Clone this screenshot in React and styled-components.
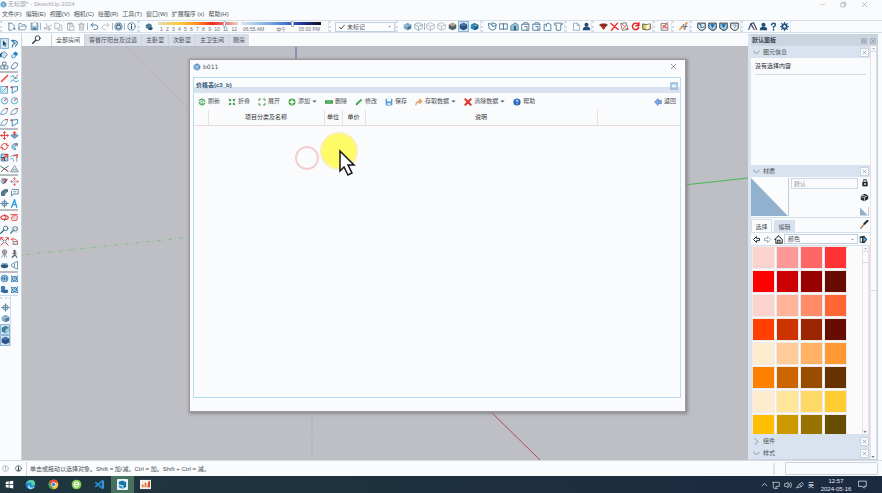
import React from "react";
import styled, { createGlobalStyle, css } from "styled-components";

const Global = createGlobalStyle`
  *, *::before, *::after { box-sizing: border-box; }
  html, body { margin: 0; height: 100%; }
  #root { height: 100%; }
  body, button, input, select, table {
    font-family: "Liberation Sans", "Noto Sans CJK SC", sans-serif;
    font-size: 6px;
    color: #4c5055;
  }
  button, input, select { margin: 0; padding: 0; border: 0; background: none; }
`;

const B = "#4f7d9d";
const D = "#1d4569";
const R = "#e8433e";
const st = (c = B, w = 1.1) => ({ fill: "none", stroke: c, strokeWidth: w, strokeLinecap: "round", strokeLinejoin: "round" });

const art = {
  file: <path d="M2.5 1.5h4.5l3 3v6.5h-7.5zM7 1.5v3h3" {...st("#8da5b6")} />,
  filePlus: <g><path d="M2.5 1.5h4l3 3v2M6 11h-3.500v-9.500" {...st(B)} /><path d="M8 9h3M9.500 7.500v3" {...st(B)} /></g>,
  folder: <path d="M1 10v-8h3.500l1 1.500h4v2M1 10l2-4.500h8.500l-2 4.500z" {...st("#7897aa")} />,
  save: <g><path d="M1.500 1.500h9v9h-9z" fill="#a9c6df" stroke={B} /><path d="M3.500 1.500h5v3.500h-5z" fill="#fff" /><path d="M3.500 7.500h5v3h-5z" fill={B} /></g>,
  cut: <g><path d="M4 2l3.500 6M11 4.500l-7 3" {...st("#a5afb8")} /><circle cx="3" cy="8.500" r="1.500" {...st("#a5afb8")} /><circle cx="8" cy="9.500" r="1.500" {...st("#a5afb8")} /></g>,
  copy: <path d="M1.500 1.500h4.500l1.500 2v5h-6zM5 8.500v2.500h5.500v-6.500l-3-1" {...st("#abb4bc")} />,
  paste: <path d="M2 2h7v3M2 2v8.500h3M4 1h3v2h-3zM5.500 5.500h5v5.500h-5z" {...st("#a2adb6")} />,
  trash: <path d="M2 3h8M4.500 3v-1.500h3v1.500M3 3l.5 8h5l.5-8M5 5v4M7 5v4" {...st("#a9b2ba")} />,
  undo: <path d="M4 1.500l-2.500 2.500l2.500 2.500M1.500 4h6q3 .5 3 3t-3 3h-2" {...st(B, 1.3)} />,
  redo: <path d="M8 1.500l2.500 2.500l-2.500 2.500M10.500 4h-6q-3 .5-3 3t3 3h2" {...st("#b4bfc8", 1.2)} />,
  print: <g><circle cx="6" cy="6" r="5" fill="#bdd2e2" stroke={B} /><path d="M3.500 5h5v3.500h-5zM4.500 5v-2h3v2" fill="#fff" stroke={D} /></g>,
  info: <g><circle cx="6" cy="6" r="5" {...st(B)} /><path d="M6 5.500v3M6 3.200v.3" {...st(D, 1.5)} /></g>,
  shadow: <g><path d="M1 4l4-2.500 4 2v4l-4 2-4-2z" fill={B} /><path d="M7 7l4 1-3 3-4-1z" fill={D} /></g>,
  cube: <g><path d="M6 1l5 2.500v5l-5 2.500-5-2.500v-5z" fill="#7eabc8" /><path d="M6 5.500l5-2v5l-5 2.500z" fill={D} opacity=".5" /><path d="M1 3.500l5 2 5-2" {...st("#d4e7f1", .7)} /></g>,
  wire: <path d="M6 1l5 2.500v5l-5 2.500-5-2.500v-5zM1 3.500l5 2.500 5-2.500M6 6v5" {...st("#8ba6b9")} />,
  wireGrey: <path d="M6 1l5 2.500v5l-5 2.500-5-2.500v-5zM1 3.500l5 2.500 5-2.500M6 6v5" {...st("#afb9c1")} />,
  darkCube: <g><path d="M6 1l5 2.500v5l-5 2.500-5-2.500v-5z" fill="#53636c" /><path d="M6 1l5 2.500-5 2.500-5-2.500z" fill="#b4a58f" /></g>,
  blueCube: <g><path d="M6 1l5 2.500v5l-5 2.500-5-2.500v-5z" fill="#2b4f86" /><path d="M6 1l5 2.500-5 2.500-5-2.500z" fill="#4674a4" /></g>,
  colorCube: <g><path d="M6 1l5 2.500v5l-5 2.500-5-2.500v-5z" fill="#248bc1" /><path d="M6 6l5-2.500v5l-5 2.500z" fill="#155b8a" /><path d="M6 4h3l-1 3z" fill="#f0a33d" /></g>,
  teal: <g><path d="M6 1l5 2.500v5l-5 2.500-5-2.500v-5z" fill="#3b7f93" /><path d="M6 6l5-2.500v5l-5 2.500z" fill="#a3cfdc" /></g>,
  iso: <path d="M1 2l4 1 1-2 5 2-1 6-4 2-4-2zM5 3l1 3 4-1" {...st("#3d7293", 1.2)} />,
  top: <path d="M1 2.500h10v7h-10zM6 2.500v7" {...st("#3d7293", 1.2)} />,
  house: <g><path d="M1 5l6-4 4 3v7h-10z" fill="#9bc9db" stroke="#3d7293" /><path d="M5 11v-6h3v6" fill="#35657f" /></g>,
  elev: <path d="M1.500 3h9v8h-9zM3 3l1-2h5l1 2M5 6h3v5" {...st("#3d7293", 1.1)} />,
  open: <path d="M1.500 11v-8h3l2-1.500 4 2v7.500zM4.500 3v3" {...st("#3d7293", 1.1)} />,
  under: <path d="M1 1.500h10v2h-2v7.500h-6v-7h-2z" {...st("#3d7293", 1.1)} />,
  user: <g><circle cx="6" cy="3.700" r="2.700" fill="#204d74" /><path d="M1 11q0-5 5-5t5 5z" fill="#204d74" /></g>,
  ruby: <g><path d="M1 4l2-2h6l2 2-5 6.500z" fill="#b22b1e" /><path d="M1 4h10" {...st("#553029", 1.5)} /></g>,
  cross: <path d="M1 2l10 8M10 1.500L2 11" {...st("#ee2b2f", 1.8)} />,
  report: <g><path d="M1 2l7-1 3 9-8 1z" fill="#fff" stroke="#555" /><path d="M3 3l3 3M8 4l-4 5M7 8l3 1" {...st(R)} /></g>,
  reload: <path d="M9.500 3a4.300 4.300 0 1 0 .7 4.500M10.500 1v4h-4" {...st("#e62928", 2)} />,
  book: <g><path d="M1 2.500l5 1 5-1v7l-5 1-5-1z" fill="#e8d450" stroke="#303030" /><path d="M6 4l4-1v6l-4 1z" fill="#fff" /></g>,
  note: <g><path d="M1.500 2h7l2 2v7h-9z" fill="#eee" stroke="#6b6b6b" /><path d="M4 8l6-7M4 5l5 3" {...st(R, 1.4)} /></g>,
  wand: <g><path d="M1 10l4-5M6 3l1 7M10 1l-2 9M3 6h8" {...st("#576876")} /><path d="M1 10l4-4M8 3l3-2" {...st("#e39a2f", 1.8)} /></g>,
  tag: <g><path d="M1 1.500h10v7l-3 2.500h-3l-4-3z" fill="#dcebf4" stroke="#252b30" strokeWidth="1.200" /><path d="M3 3h2v4h4" {...st("#3c789e", 1.6)} /></g>,
  tagBlue: <g><path d="M1 1.500h10v7l-3 2.500h-3l-4-3z" fill="#9ccce9" stroke="#252b30" strokeWidth="1.200" /><path d="M3 3h6l-3 5z" fill="#1264a2" /></g>,
  tagPlain: <g><path d="M1 1.500h10v7l-3 2.500h-3l-4-3z" fill="#f5f8fb" stroke="#252b30" strokeWidth="1.200" /><path d="M4 4h4v2l-2 1.500" {...st(B)} /></g>,
  mark: <g><path d="M1 10L4 2l4 8M4.500 2l3-1 4 9" {...st("#214b71", 1.5)} /><path d="M5 6l4 4" {...st("#d44b36", 1.3)} /></g>,
  question: <path d="M3.500 4q0-2.500 2.500-2.500t2.500 2.200q0 1.500-2.500 2.800v1M6 10v.500" {...st("#1f5d93", 2)} />,
  gear: <g><circle cx="6" cy="6" r="3" {...st("#205789", 2.6)} /><path d="M6 .7v1.500M6 9.800v1.500M.7 6h1.500M9.800 6h1.500M2.200 2.200l1 1M8.800 8.800l1 1M9.800 2.200l-1 1M3.200 8.800l-1 1" {...st("#205789", 1.500)} /></g>,
  arrow: <path d="M4 2v7l1.500-1.500 1.200 2.500 1.300-.8-1.200-2.200h2.200z" fill="#173e63" />,
  lasso: <path d="M2 2q7-1 8 4M2 2l5 4-3 1-1 4M10 6l-3 4" {...st("#367da5", 1.4)} />,
  bucket: <g><path d="M2 4l4-2 4 4-4 5-4-2z" fill="#c5dfed" stroke={B} /><path d="M2 4q-2 2-1 5" {...st(D, 1.4)} /></g>,
  eraser: <g><path d="M1 8l6-6 4 3-5 6h-3z" fill="#277fbd" /><path d="M1 8l3-3 4 3-3 3z" fill="#bde0f3" /></g>,
  group: <g><path d="M4 1.500h4v4h-4zM1.500 6.500h4v4h-4zM6.500 6.500h4v4h-4z" {...st("#5e7d91", 1.2)} /></g>,
  shape: <path d="M2 7l4-5 4 1v3l-4 4.500h-3z" {...st(B, 1.2)} />,
  pencil: <path d="M2 10l8-8" {...st(R, 2)} />,
  free: <g><path d="M1 4q4-4 4 0t5 1M1 10q4-4 5-1t5 0" {...st("#3ca0cb", 1.3)} /><path d="M7 5l3-4" {...st(R)} /></g>,
  rect: <g><path d="M1 2h9v9h-9z" fill="#d8eff7" stroke="#4b9ec5" /><path d="M3 9l6-6" {...st("#4b9ec5")} /><path d="M8 2h2v2" {...st(R, 1.3)} /></g>,
  rot: <g><path d="M1 3l9-1v5l-6 3M3 3v8" {...st("#3b8db7", 1.3)} /><circle cx="2" cy="3" r="1.200" fill={R} /></g>,
  circle: <g><circle cx="6" cy="6.300" r="4.300" fill="#e2f3fa" stroke="#4599bf" /><path d="M6 6l3-3" {...st(R, 1.4)} /></g>,
  arc: <g><path d="M1 10q1-7 7-8M2 10q8 1 8-8" {...st("#5b8ba5")} /><path d="M8 2h2" {...st(R, 1.6)} /></g>,
  move: <path d="M6 1v10M1 6h10M4.500 2.500L6 1l1.500 1.500M4.500 9.500L6 11l1.500-1.500M2.500 4.500L1 6l1.500 1.500M9.500 4.500L11 6l-1.500 1.500" {...st(R, 1.3)} />,
  push: <g><path d="M1 6l5-2 5 2-5 4z" fill="#6ab4da" stroke="#3182b0" /><path d="M6 7v-6M4 3l2-2 2 2" {...st(R, 1.4)} /></g>,
  rotate: <path d="M2 5q1-3 4-3t4 3M10 7q-1 3-4 3t-4-3M9 2v3h3M3 10v-3h-3" {...st(R, 1.3)} />,
  follow: <g><path d="M8 10h-3q-4-2-2-6 3-3 7-2v3q-4-1-4 2z" fill="#a3d0e5" stroke="#408eb4" /><path d="M7 3h3" {...st(R, 1.4)} /></g>,
  scale: <g><path d="M1.500 1.500h9v9h-9z" fill="#a9d4e8" stroke="#366f91" /><path d="M3 9l6-6M6 2h4v4" {...st(R, 1.5)} /><path d="M1.500 6h4.500v4.500" {...st(D)} /></g>,
  offset: <g><path d="M1 5q7-5 8 0v6M1 8q4-3 4 3" {...st("#6a99b2")} /><path d="M5 4l5-2-1 4" {...st(R, 1.4)} /></g>,
  tape: <g><path d="M1 3l10 7M2 10l4-4 5-3" {...st("#416e79", 1.3)} /><path d="M6 6.500l3 2" {...st(R, 1.4)} /></g>,
  prot: <path d="M1 10l5-8 5 8zM4 10v-3h4v3" {...st("#7c96a4", 1.2)} />,
  paintRed: <g><circle cx="5" cy="5" r="4" fill="#9bbcce" /><path d="M4 4l4-1-1 4" {...st(R, 1.7)} /><path d="M4 9l6-6" {...st(D)} /></g>,
  diamond: <g><path d="M6 2v.1M2 6h.1M10 6h.1M6 10v.1" {...st(R, 2.800)} /><path d="M4 4l4 4M8 4l-4 4" {...st("#7d9eb4", 1)} /></g>,
  film: <path d="M2 10V6q1-4 8-4v3q-4 0-4 5z" fill="#507f95" stroke="#355669" />,
  label: <path d="M3 2h8v6h-7l-2 3v-7M5 5h3" {...st(B)} />,
  target: <g><circle cx="6" cy="6" r="3.500" fill="#c8d9e4" stroke={B} /><path d="M6 1v10M1 6h10" {...st(B)} /></g>,
  textA: <path d="M2 11L6 1l3 10M3.500 7.500h4" {...st("#319dd7", 1.8)} />,
  orbit: <g><ellipse cx="6" cy="6" rx="5" ry="2.600" {...st(R, 1.600)} /><path d="M6 2l2 3-2 5" {...st("#a84745", 1.3)} /></g>,
  pan: <g><path d="M3 10q-3-5 0-4 0-5 2-2 3-3 5 1l-1 5z" fill="#f0d4d2" stroke={R} /><path d="M1 2h9" {...st(R)} /></g>,
  zoom: <g><circle cx="7.500" cy="4.500" r="3" {...st("#356d91", 1.2)} /><path d="M5 7l-4 4" {...st("#356d91", 1.7)} /></g>,
  zoomWin: <g><path d="M1 2h10v8h-10z" fill="#d8e6ed" /><circle cx="7" cy="5" r="3" {...st("#557d94")} /><path d="M4.500 7L1 11" {...st("#557d94", 1.6)} /></g>,
  extents: <g><path d="M1 1l10 10M11 1L1 11M1 4V1h3M8 1h3v3" {...st(R, 1.3)} /><circle cx="6" cy="6" r="2" fill="#fff" stroke={B} /></g>,
  prev: <g><path d="M2 3h5q4 1 3 6h-4M4 1L2 3l2 2" {...st(R, 1.1)} /><path d="M4 6h6v4h-6z" fill="#e5d9d9" stroke="#887276" /></g>,
  camera: <g><circle cx="6" cy="4" r="3" fill="#b4bbbd" stroke="#6a7478" /><circle cx="6" cy="4" r="1" fill={R} /><path d="M5 7l-3 4M7 7l2 4M6 7v4" {...st("#798e98")} /></g>,
  walk: <g><circle cx="6" cy="2.500" r="1.600" fill="#4d626e" /><path d="M6 4v4l-3 3M6 7l3 4M4 6l4-1" {...st("#4d626e", 1.6)} /><path d="M6 4l2 3" {...st(R)} /></g>,
  eye: <g><ellipse cx="6" cy="6" rx="5" ry="3.500" fill="#2c5875" /><path d="M2 5q4-3 8 0" {...st("#87bad4", 1.5)} /></g>,
  section: <path d="M10 1v10l-8-4v-2zM6 4v4" {...st("#5e8faa", 1.2)} />,
  globe: <g><circle cx="6" cy="6" r="5" fill="#3e81b1" /><path d="M2 4q4-3 8 0M2 8q4 3 8 0M6 1q-4 5 0 10M6 1q4 5 0 10" {...st("#c8e2ee", .8)} /></g>,
  mesh: <g><path d="M1 2l4 1 6-1-1 4 1 5-5-1-5 1 1-5z" fill="#438bbd" /><path d="M3 4l6 5M9 3L3 9" {...st("#e2f1f8", 1.1)} /></g>,
  layers: <g><circle cx="4" cy="4" r="3" fill="#3a79ae" /><path d="M1 7l9-1 1 4-5 1-5-2z" fill="#2568a0" /></g>,
  refresh: <g><path d="M2 4q3-4 7-1l1 2M10 8q-3 4-7 1l-1-2" {...st("#5baa62", 2)} /><path d="M4 6l3-2M5 9l3-2" {...st("#76bd7a", 1.7)} /></g>,
  collapse: <path d="M1.500 1.500l2.500 2.500M10.500 1.500L8 4M1.500 10.500L4 8M10.500 10.500L8 8M4 2v2H2M8 2v2h2M4 10V8H2M8 10V8h2" {...st("#3f9547", 1.5)} />,
  expand: <path d="M1.500 4V1.500H4M8 1.500h2.500V4M1.500 8v2.500H4M8 10.500h2.500V8" {...st("#559a5c", 1.5)} />,
  add: <g><circle cx="6" cy="6" r="5.200" fill="#3ea646" /><path d="M6 3v6M3 6h6" {...st("#fff", 2)} /></g>,
  minus: <g><rect x="0" y="3.500" width="12" height="5" rx="1" fill="#369a3f" /><path d="M3 6h6" {...st("#b7e4ba", 1)} /></g>,
  pen: <g><path d="M1 11l1-3 7-7 2 2-7 7z" fill="#44a949" /><path d="M1 11l1-2 1 1z" fill="#444" /></g>,
  disk: <g><rect x="1" y="1" width="10" height="10" rx="1" fill="#5a9cd8" /><path d="M3 1h6v4h-6z" fill="#fff" /><path d="M3 7h6v4h-6z" fill="#dae9f5" stroke="#377db7" strokeWidth=".6" /></g>,
  share: <path d="M1 11q0-7 6-7V1l4 4-4 4V6q-4 0-6 5z" fill="#f2aa6b" stroke="#cc7131" strokeWidth=".6" />,
  clear: <path d="M2 2l8 8M10 2l-8 8" {...st("#df3a31", 3.2)} />,
  help: <g><circle cx="6" cy="6" r="5.400" fill="#2467ba" /><path d="M4.300 4.500q0-1.500 1.700-1.500t1.700 1.500q0 1-1.700 1.800M6 8.500v.400" {...st("#fff", 1.3)} /></g>,
  back: <path d="M6 .8L1 6l5 5.200V8.500h5v-5H6z" fill="#7fa8de" stroke="#4a7cc4" strokeWidth="1" />,
  logo: <g><path d="M6 .5l5 3v5l-5 3-5-3v-5z" fill="#5b96c6" /><path d="M2 3l4 2 4-2M6 5v6M3 8l6-4M3 5l6 4" {...st("#c9e1f1", .8)} /></g>,
  box: <g><path d="M1 1h10v10H1z" fill="#a9cce8" stroke="#7eabd2" /><path d="M3 4h6v4H3z" fill="#e8f3fb" /></g>,
  check: <path d="M1 6l3 4 7-8" {...st("#42424e", 1.8)} />,
  x: <path d="M2 2l8 8M10 2l-8 8" {...st("currentColor", 1)} />,
  min: <path d="M2 6h8" {...st("#e5a5ad", 1)} />,
  max: <path d="M2 4h6v6H2zM4 4V2h6v6H8" {...st("#888", .8)} />,
  pin: <path d="M1.500 1.500h9v9h-9zM4 4h4v3H4zM6 7v2" {...st("#718096", 1)} />,
  boxX: <path d="M1.500 1.500h9v9h-9zM4 4l4 4M8 4L4 8" {...st("#718096", 1)} />,
  down: <path d="M1 3.500l5 5 5-5" {...st("#68747f", 1.2)} />,
  right: <path d="M3.500 1l5 5-5 5" {...st("#68747f", 1.2)} />,
  triUp: <path d="M3 7.500l3-3 3 3z" fill="#777" />,
  triDown: <path d="M1 3.500h10l-5 5z" fill="currentColor" />,
  search: <g><circle cx="7.500" cy="4.300" r="3.200" {...st("#303c45", 1.3)} /><path d="M5 7L1 11" {...st("#303c45", 2)} /></g>,
  jar: <g><path d="M2 4h8v7H2z" fill="#20282c" /><path d="M4 3V1h4v2" {...st("#30393e", 1.4)} /><path d="M5 6h2v3H5z" fill="#fff" /></g>,
  brick: <g><path d="M1 4l5-3 5 2v5l-5 3-5-2z" fill="#282b2d" /><path d="M1 5l5 1 5-3M6 6v4M3 3l4 1" {...st("#d8d8d8", 1)} /></g>,
  dropper: <g><path d="M1 11l6-7" {...st("#a67850", 1.7)} /><path d="M6 5l4-4" {...st("#272c34", 2.7)} /></g>,
  navL: <path d="M2 6l4-4v2.500h4v3H6V10z" fill="#fff" stroke="#26323d" strokeWidth="1.300" />,
  navR: <path d="M10 6L6 2v2.500H2v3h4V10z" fill="#fff" stroke="#89929a" strokeWidth="1" />,
  home: <path d="M1 6l5-5 5 5v5H2.500V6M5 11V7h3v4" {...st("#2b3135", 1.400)} />,
  detail: <g><path d="M1 2l6-1 4 5-4 5-6-1z" fill="#27343e" /><path d="M6 3l4 3-4 3z" fill="#53aed9" /><path d="M2 4h2v5H2z" fill="#fff" /></g>,
  win: <path d="M1 2.500l4-.7v3.700H1zM6 1.700l5-.8v4.600H6zM1 6.500h4v3.800l-4-.6zM6 6.500h5v4.700l-5-.8z" fill="#fff" />,
  edge: <g><circle cx="6" cy="6" r="5.300" fill="#1c86cf" /><path d="M1 6Q2 1 7 1q4 0 4 4 0 3-4 2 1-4-3-3Q2 4 1 6z" fill="#5bd0a0" /><path d="M5 6q-1 4 4 3l2-1q-2 4-6 3Q1 9 5 6z" fill="#95dcf6" /></g>,
  chrome: <g><circle cx="6" cy="6" r="5.300" fill="#f6c72f" /><path d="M1.300 3.500A5.300 5.300 0 0 1 11 4H6L4 7z" fill="#e54c3b" /><path d="M1.300 3.500L5 9l1 2.300A5.300 5.300 0 0 1 1.300 3.500z" fill="#3fa65a" /><circle cx="6" cy="6" r="2.300" fill="#3e80df" stroke="#fff" strokeWidth=".7" /></g>,
  green: <g><circle cx="6" cy="6" r="5.300" fill="#82cf4d" /><path d="M3.500 6h5q0-2.700-2.500-2.700T3.500 6t2.500 2.700l2-1" {...st("#fff", 1.300)} /></g>,
  code: <g><path d="M8.500 1L11 2v8l-2.500 1z" fill="#3198df" /><path d="M9 2L2 8M9 10L2 4" {...st("#2b8bd1", 2)} /></g>,
  sketch: <g><rect x="0" y="0" width="12" height="12" rx="1" fill="#e8f3f8" /><path d="M2 3l4-1.500 4 2v5l-3 2V7L2 6z" fill="#1675ac" /><path d="M2 7l4 1v3L2 9z" fill="#2e90c8" /></g>,
  media: <g><path d="M0 1h12v10H0z" fill="#f6eeea" /><path d="M2 9V6h2v3M5 9V4h2v5" fill="#e17d2e" /><path d="M8 9l1-6 2-1v7z" fill="#d44d35" /></g>,
  monitor: <path d="M1 2h10v6H6v3M3 11h5M2 2v8" {...st("#e4e8ef", 1)} />,
  sound: <path d="M1 4h2l3-2v8L3 8H1zM8 4q2 2 0 4M10 2q3 4 0 8" {...st("#e4e8ef", 1)} />,
  link: <path d="M1 10l4-5 3 3zM5 5l4-3 2 3-3 3" {...st("#e4e8ef", 1)} />,
  up: <path d="M2 8l4-4 4 4" {...st("#e4e8ef", 1.3)} />,
  chat: <path d="M1 1.500h10v7H8v2.500L6 8.500H1z" {...st("#e4e8ef", 1)} />,
  statusQ: <g><circle cx="6" cy="6" r="5" {...st("#98a0a6", 1)} /><path d="M6 3v3M6 8.500v.300" {...st("#98a0a6", 1.500)} /></g>,
  statusI: <g><circle cx="6" cy="6" r="5" {...st("#30373c", 1)} /><path d="M6 3v6M4.500 9h3" {...st("#30373c", 1.600)} /></g>,
};

const Svg = styled.svg`
  display: block;
  flex: none;
  width: ${(p) => p.$s || 9}px;
  height: ${(p) => p.$s || 9}px;
`;
const Icon = ({ n, s }) => <Svg viewBox="0 0 12 12" $s={s} aria-hidden="true">{art[n]}</Svg>;

const Screen = styled.div`
  height: 100vh;
  display: flex;
  flex-direction: column;
  overflow: hidden;
  background: #f9fbfd;
  white-space: nowrap;
`;
const TitleBar = styled.header`
  display: flex;
  align-items: center;
  height: 9px;
  gap: 1px;
  color: #a5a5aa;
  line-height: 9px;
`;
const WindowButtons = styled.div`
  display: flex;
  margin-left: auto;
  gap: 12px;
  padding-right: 13px;
`;
const IconButton = styled.button`
  display: flex;
  align-items: center;
  justify-content: center;
  width: ${(p) => p.$w || 11}px;
  height: ${(p) => p.$h || 11}px;
  color: ${(p) => p.$c || "#4c5055"};
  ${(p) => p.$on && css`background: #cfe2f1; box-shadow: inset 0 0 0 1px #8db5d4; border-radius: 1px;`}
  ${(p) => p.$framed && css`background: #fbfcfe; border: 1px solid #c6d3e2;`}
`;
const MenuBar = styled.nav`
  display: flex;
  align-items: flex-start;
  gap: 4px;
  height: 11px;
  padding: 0 2px;
  button { line-height: 10px; }
`;
const Toolbar = styled.div`
  display: flex;
  height: 13px;
  border-top: 1px solid #d5dfe9;
  border-bottom: 1px solid #d5dfe9;
`;
const ToolGroup = styled.div`
  display: flex;
  align-items: center;
  width: ${(p) => p.$w}px;
  padding-left: 4px;
  border-left: 2px dotted #d3dde9;
  border-right: 1px solid #dce5ee;
  ${(p) => (p.$packed ? css`gap: 3px;` : css`justify-content: space-between;`)}
`;
const Divider = styled.span`
  width: 1px;
  height: 7px;
  background: #a4b4c2;
`;
const SliderBox = styled.label`
  display: flex;
  flex-direction: column;
  width: 80px;
  height: 11px;
  padding-top: 1px;
`;
const Range = styled.input`
  appearance: none;
  width: 100%;
  height: 3px;
  background: ${(p) => p.$bg};
  &::-webkit-slider-thumb {
    appearance: none;
    width: 3px;
    height: 6px;
    background: #fff;
    border: 1px solid #a9b0b8;
    border-radius: 1px;
  }
`;
const Ticks = styled.span`
  display: flex;
  justify-content: space-between;
  padding: 1px 1px 0 2px;
  font-size: 5px;
  line-height: 6px;
  color: #6d7178;
`;
const Picker = styled.label`
  display: flex;
  align-items: center;
  gap: 2px;
  flex: 1;
  min-width: 0;
  height: 10px;
  padding: 0 3px;
  border: 1px solid #c0d0df;
  background: #fcfdfe;
  color: #777;
  select { appearance: none; flex: 1; min-width: 0; height: 8px; line-height: 8px; }
`;
const Work = styled.div`
  display: flex;
  flex: 1;
  min-height: 0;
`;
const ToolRail = styled.aside`
  width: 22px;
  padding-top: 5px;
  border-right: 1px solid #c8d5e2;
`;
const RailGroup = styled.div`
  display: grid;
  grid-template-columns: 9px 11px;
  grid-auto-rows: ${(p) => p.$row || 11}px;
  align-items: center;
  border-bottom: ${(p) => (p.$last ? "1px solid #c9dced" : "2px solid #b9bcc2")};
  margin-right: 3px;
`;
const SubRail = styled.div`
  display: flex;
  flex-direction: column;
  width: 11px;
  margin-top: 1px;
  padding-top: 3px;
  border-top: 2px dotted #d3dde9;
  border-right: 1px solid #c9dced;
`;
const Stage = styled.main`
  display: flex;
  flex-direction: column;
  flex: 1;
  min-width: 0;
`;
const SceneTabs = styled.div`
  display: flex;
  align-items: flex-end;
  height: 14px;
  border-bottom: 1px solid #b7bbc3;
`;
const SearchButton = styled(IconButton)`
  width: 29px;
  height: 13px;
`;
const SceneTab = styled.button`
  height: 12px;
  padding: 0 4px;
  border-left: 1px solid #c9d2de;
  background: ${(p) => (p.$on ? "#fbfcfe" : "#d8dde7")};
  line-height: 12px;
`;
const Canvas = styled.div`
  position: relative;
  flex: 1;
  min-height: 0;
  overflow: hidden;
  background: #bebfc4;
`;
const Axes = styled.svg`
  display: block;
  width: 100%;
  height: 100%;
`;
const Dialog = styled.section`
  position: absolute;
  inset: 13px 63px 49px 168px;
  display: flex;
  flex-direction: column;
  padding: 0 4px 13px 3px;
  background: #f9fbfd;
  box-shadow: 0 0 0 1px #9f969e, 1px 1px 3px 2px #8b8c93;
`;
const DialogTitle = styled.header`
  display: flex;
  align-items: center;
  gap: 2px;
  height: 17px;
  padding: 0 2px 4px 0;
  font-family: "DejaVu Sans", sans-serif;
  > button { margin-left: auto; }
`;
const Sheet = styled.div`
  display: flex;
  flex-direction: column;
  flex: 1;
  min-height: 0;
  border: 1px solid #b9dcf0;
`;
const SheetTitle = styled.h1`
  display: flex;
  align-items: center;
  justify-content: space-between;
  height: 15px;
  margin: 0;
  padding: 0 2px;
  background: linear-gradient(#f9fbfd 60%, #d8e3ef 60%);
  font: bold 6px/15px "Liberation Sans", "Noto Sans CJK SC", sans-serif;
  color: #2d5376;
`;
const Actions = styled.div`
  display: flex;
  align-items: center;
  gap: 8px;
  height: 17px;
  padding: 0 4px;
  > :last-child { margin-left: auto; }
`;
const Action = styled.button`
  display: flex;
  align-items: center;
  gap: 2px;
  height: 11px;
  line-height: 11px;
`;
const Prices = styled.table`
  width: 100%;
  table-layout: fixed;
  border-collapse: collapse;
  th {
    height: 15px;
    padding: 0;
    border-bottom: 1px solid #edd9de;
    border-right: 1px solid #eddde2;
    font-size: 6px;
    font-weight: 400;
    line-height: 12px;
    color: #333;
  }
  th:last-child { border-right: 0; }
`;
const Col = styled.col`
  width: ${(p) => (p.$w ? `${p.$w}px` : "auto")};
`;
const Pointer = styled.svg`
  position: absolute;
  left: 272px;
  top: 84px;
  width: 66px;
  height: 46px;
`;
const Tray = styled.aside`
  display: flex;
  flex-direction: column;
  width: 130px;
  margin: 1px 4px 0 0;
  border: 1px solid #c7d2df;
  border-left: 3px solid #dbe5f0;
`;
const TrayTitle = styled.h2`
  display: flex;
  align-items: center;
  flex: none;
  height: 11px;
  gap: 1px;
  margin: 0;
  padding: 0 0 0 1px;
  background: #ccd4df;
  font-size: 6px;
  line-height: 11px;
  color: #3a4550;
  span { flex: 1; }
`;
const TrayMain = styled.div`
  display: flex;
  flex: 1;
  min-height: 0;
`;
const Panels = styled.div`
  display: flex;
  flex-direction: column;
  flex: 1;
  min-width: 0;
`;
const PanelHead = styled.h3`
  display: flex;
  align-items: center;
  gap: 3px;
  flex: none;
  height: 12px;
  margin: 0;
  padding: 0 1px 0 2px;
  background: #d9e3ef;
  font-size: 6px;
  font-weight: 400;
  line-height: 12px;
  span { flex: 1; }
`;
const EntityInfo = styled.div`
  height: 107px;
  padding: 4px 4px 0;
  p { margin: 0; padding-bottom: 3px; border-bottom: 1px solid #cfdcec; line-height: 9px; color: #25292d; }
`;
const Scroll = styled.div`
  display: flex;
  flex-direction: column;
  justify-content: space-between;
  width: 7px;
  border-left: 1px solid #efdde0;
  border-right: 1px solid ${(p) => (p.$inner ? "#efdde0" : "#d6dfe9")};
`;
const Thumb = styled.div`
  height: ${(p) => p.$h};
  margin-bottom: auto;
  border: solid #d3dce7;
  border-width: 1px 0;
  background: #fbfcfe;
`;
const Material = styled.div`
  display: grid;
  grid-template-columns: 38px 1fr 9px;
  gap: 2px;
  height: 41px;
  padding: 1px 1px 2px 0;
  border-bottom: 1px solid #d3e0ec;
`;
const Preview = styled.svg`
  display: block;
  width: 100%;
  height: ${(p) => p.$h}px;
  background: #fbfcfe;
  border-right: 1px solid #c5cbd3;
`;
const NameInput = styled.input`
  width: 100%;
  height: 11px;
  padding: 0 2px;
  border: 1px solid #cad9e7;
  color: #999;
`;
const SideIcons = styled.div`
  display: flex;
  flex-direction: column;
  justify-content: space-between;
  align-items: center;
  padding-top: 1px;
`;
const ModeTabs = styled.div`
  display: flex;
  align-items: flex-end;
  gap: 2px;
  height: 15px;
  padding-right: 1px;
  border-bottom: 1px solid #d3e0ec;
  > :last-child { margin: 0 0 2px auto; }
`;
const ModeTab = styled.button`
  width: 21px;
  height: ${(p) => (p.$on ? 13 : 12)}px;
  border: 1px solid #d3dfeb;
  border-bottom: 0;
  background: ${(p) => (p.$on ? "#fbfcfe" : "#d9e3ef")};
`;
const NavRow = styled.div`
  display: flex;
  align-items: center;
  height: 12px;
  padding-right: 1px;
`;
const SwatchArea = styled.div`
  display: flex;
  flex: 1;
  min-height: 0;
  border: 1px solid #d8e2ee;
`;
const Swatches = styled.div`
  display: grid;
  grid-template-columns: repeat(4, 21px);
  grid-auto-rows: 21px;
  gap: 3px;
  flex: 1;
  padding: 1px;
  overflow: hidden;
`;
const Swatch = styled.button`
  background: ${(p) => p.$c};
  box-shadow: 0 0 0 1px #eee9ea;
`;
const StatusBar = styled.footer`
  display: flex;
  align-items: center;
  gap: 2px;
  height: 16px;
  border-top: 1px solid #d5dbe2;
  line-height: 14px;
`;
const StatusText = styled.span`
  padding-left: 3px;
  border-left: 1px solid #cddbe9;
`;
const Measure = styled.input`
  width: 93px;
  height: 13px;
  margin: 0 4px 0 8px;
  border: 1px solid #cbd3de;
  border-radius: 1px;
`;
const StatusGrip = styled.span`
  width: 2px;
  height: 12px;
  margin-left: auto;
  background: #dae5f0;
`;
const TaskBar = styled.footer`
  display: flex;
  align-items: center;
  height: 17px;
  background: linear-gradient(90deg, #20363d, #1b2a41);
  color: #e4e8ef;
`;
const Task = styled.button`
  display: flex;
  align-items: center;
  justify-content: center;
  width: ${(p) => p.$w || 23}px;
  height: 17px;
  background: ${(p) => (p.$on ? "#47705e" : "none")};
`;
const Systray = styled.div`
  display: flex;
  align-items: center;
  gap: 4px;
  margin-left: auto;
  padding-right: 15px;
  time { width: 36px; text-align: center; line-height: 8px; }
`;

const groupA = ["filePlus", "folder", "save", "|", "cut", "copy", "paste", "trash", "|", "undo", "redo", "|", "print", "|", "info"];
const groups = [
  [85, ["cube", "wire", "|", "wireGrey", "wireGrey", "darkCube", "blueCube*", "colorCube"]],
  [84, ["iso", "top", "house", "elev", "elev", "open", "under"]],
  [27, ["file", "user"]],
  [61, ["ruby", "cross", "report", "reload", "book"]],
  [19, ["note"]],
  [18, ["wand"]],
  [51, ["tag", "tagBlue", "tagBlue", "tagPlain"]],
  [50, ["mark", "user", "question", "gear"]],
];
const rail = [
  ["arrow*", "lasso", "bucket", "eraser", "group", "shape"],
  ["pencil", "free", "rect", "rot", "circle", "circle", "arc", "arc", "arc", "rot"],
  ["move", "push", "rotate", "follow", "scale", "offset", "tape", "prot"],
  ["paintRed", "diamond", "film", "label", "target", "textA"],
  ["orbit", "pan", "zoom", "zoomWin", "extents", "prev", "camera", "walk", "eye", "section"],
  ["globe", "mesh", "layers", "mesh"],
];
const colors = [
  "#fbd3ce", "#ff9999", "#ff6666", "#ff3333", "#ff0000", "#cc0000", "#990000", "#660d00",
  "#fbd3ce", "#ffb399", "#ff8c66", "#ff6633", "#ff4000", "#cc3300", "#992600", "#660d00",
  "#fdecd0", "#ffcc99", "#ffb266", "#ff9933", "#ff8000", "#cc6600", "#994d00", "#663300",
  "#fdecd0", "#ffe699", "#ffd966", "#ffcc33", "#ffbf00", "#cc9900", "#997300", "#664d00",
];
const actions = [
  ["refresh", "刷新"], ["collapse", "折叠"], ["expand", "展开"], ["add", "添加", true], ["minus", "删除"], ["pen", "修改"],
  ["disk", "保存"], ["share", "存取数据", true], ["clear", "清除数据", true], ["help", "帮助"], ["back", "返回"],
];

const Tool = ({ n, w, h }) => {
  if (n === "|") return <Divider />;
  const name = n.replace("*", "");
  return <IconButton $w={w} $h={h} $on={n !== name} aria-label={name}><Icon n={name} /></IconButton>;
};

const PanelHeader = ({ title, open }) => (
  <PanelHead>
    <Icon n={open ? "down" : "right"} s={7} />
    <span>{title}</span>
    <IconButton $framed $w={9} $h={9} aria-label={`关闭${title}`}><Icon n="x" s={5} /></IconButton>
  </PanelHead>
);

export default function App() {
  return (
    <Screen>
      <Global />
      <TitleBar>
        <Icon n="logo" s={7} />无标题* - SketchUp 2024
        <WindowButtons>
          <IconButton $w={9} $h={9} aria-label="最小化"><Icon n="min" s={7} /></IconButton>
          <IconButton $w={9} $h={9} aria-label="还原"><Icon n="max" s={7} /></IconButton>
          <IconButton $w={9} $h={9} $c="#999" aria-label="关闭"><Icon n="x" s={7} /></IconButton>
        </WindowButtons>
      </TitleBar>
      <MenuBar>
        {["文件(F)", "编辑(E)", "视图(V)", "相机(C)", "绘图(R)", "工具(T)", "窗口(W)", "扩展程序 (x)", "帮助(H)"].map((t) => <button key={t}>{t}</button>)}
      </MenuBar>
      <Toolbar>
        <ToolGroup $w={138}>{groupA.map((n, i) => <Tool key={i} n={n} />)}</ToolGroup>
        <ToolGroup $w={191} $packed>
          <Tool n="shadow" />
          <SliderBox>
            <Range type="range" aria-label="日期" defaultValue="84" $bg="linear-gradient(90deg, #e8dcb0, #ffc530 30%, #fb8b28 50%, #ee2a21 68%, #ec6a60 82%, #e9d0d0)" />
            <Ticks>{Array.from({ length: 12 }, (_, i) => <span key={i}>{i + 1}</span>)}</Ticks>
          </SliderBox>
          <SliderBox>
            <Range type="range" aria-label="时间" defaultValue="65" $bg="linear-gradient(90deg, #dce7f2, #6b9fdb 40%, #3157c5 65%, #1c2f86 80%, #10121d)" />
            <Ticks><span>06:55 AM</span><span>中午</span><span>05:00 PM</span></Ticks>
          </SliderBox>
        </ToolGroup>
        <ToolGroup $w={67}>
          <Picker>
            <Icon n="check" s={6} />
            <select aria-label="标记"><option>未标记</option></select>
            <Icon n="triDown" s={3} />
          </Picker>
        </ToolGroup>
        {groups.map(([w, list], i) => (
          <ToolGroup key={i} $w={w}>{list.map((n, j) => <Tool key={j} n={n} />)}</ToolGroup>
        ))}
      </Toolbar>
      <Work>
        <ToolRail>
          {rail.map((g, i) => (
            <RailGroup key={i} $row={i === 4 ? 12 : 11} $last={i === 5}>
              {g.map((n, j) => <Tool key={j} n={n} w={j % 2 ? 11 : 9} />)}
            </RailGroup>
          ))}
          <SubRail>
            {["target", "cube", "teal*", "blueCube*"].map((n) => <Tool key={n} n={n} w={10} />)}
          </SubRail>
        </ToolRail>
        <Stage>
          <SceneTabs>
            <SearchButton aria-label="搜索"><Icon n="search" /></SearchButton>
            {["全部房间", "客餐厅阳台及过道", "主卧室", "次卧室", "主卫生间", "厨房"].map((t, i) => <SceneTab key={t} $on={!i}>{t}</SceneTab>)}
          </SceneTabs>
          <Canvas>
            <Axes viewBox="0 0 726 413" preserveAspectRatio="xMidYMid slice" fill="none">
              <path d="M274 0v20" stroke="#5560b4" />
              <path d="M104 0l70 68" stroke="#b08f96" strokeDasharray="1 3" />
              <path d="M0 208l170-18" stroke="#84c08a" strokeDasharray="1 3 4 3" />
              <path d="M662 138l64-7" stroke="#45b850" />
              <path d="M464 360l54 53" stroke="#b5475b" />
              <path d="M290 360v53" stroke="#999da8" strokeDasharray="1 2" />
            </Axes>
            <Dialog role="dialog" aria-label="b011">
              <DialogTitle><Icon n="logo" s={8} />b011<IconButton aria-label="关闭"><Icon n="x" s={7} /></IconButton></DialogTitle>
              <Sheet>
                <SheetTitle>价格表(c3_b)<IconButton $w={8} aria-label="折叠面板"><Icon n="box" s={8} /></IconButton></SheetTitle>
                <Actions>
                  {actions.map(([n, t, menu]) => (
                    <Action key={t}><Icon n={n} s={8} />{t}{menu && <Icon n="triDown" s={5} />}</Action>
                  ))}
                </Actions>
                <Prices>
                  <colgroup><Col $w={14} /><Col $w={116} /><Col $w={18} /><Col $w={23} /><Col $w={232} /><Col /></colgroup>
                  <thead><tr><th /><th>项目分类及名称</th><th>单位</th><th>单价</th><th>说明</th><th /></tr></thead>
                </Prices>
              </Sheet>
            </Dialog>
            <Pointer viewBox="0 0 66 46">
              <circle cx="13" cy="27" r="11" fill="none" stroke="#f3cfcd" strokeWidth="2" />
              <circle cx="45" cy="20" r="18" fill="#fffb66" stroke="#fbeeb8" strokeWidth="2" />
              <path d="M46 20v20l4-4 4 8 4-2-4-8h6z" fill="#fff" stroke="#17171c" strokeWidth="1.500" />
            </Pointer>
          </Canvas>
        </Stage>
        <Tray>
          <TrayTitle>
            <span>默认面板</span>
            <IconButton $w={8} aria-label="固定"><Icon n="pin" s={6} /></IconButton>
            <IconButton $w={8} aria-label="关闭面板"><Icon n="boxX" s={6} /></IconButton>
          </TrayTitle>
          <TrayMain>
            <Panels>
              <PanelHeader title="图元信息" open />
              <EntityInfo><p>没有选择内容</p></EntityInfo>
              <PanelHeader title="材质" open />
              <Material>
                <Preview $h={38} viewBox="0 0 38 38" preserveAspectRatio="none"><path d="M0 0l38 38H0z" fill="#91b1cf" /></Preview>
                <NameInput aria-label="材质名称" defaultValue="默认" />
                <SideIcons>
                  <Icon n="jar" s={8} />
                  <Icon n="brick" />
                  <Preview $h={9} viewBox="0 0 9 9"><path d="M0 0l9 9H0z" fill="#91b1cf" /></Preview>
                </SideIcons>
              </Material>
              <ModeTabs>
                <ModeTab $on>选择</ModeTab><ModeTab>编辑</ModeTab>
                <IconButton $w={9} aria-label="取样"><Icon n="dropper" /></IconButton>
              </ModeTabs>
              <NavRow>
                <Tool n="navL" /><Tool n="navR" /><Tool n="home" />
                <Picker>
                  <select aria-label="材质库"><option>颜色</option></select>
                  <Icon n="triDown" s={3} />
                </Picker>
                <Tool n="detail" />
              </NavRow>
              <SwatchArea>
                <Swatches>{colors.map((c, i) => <Swatch key={i} $c={c} aria-label={c} />)}</Swatches>
                <Scroll $inner><Icon n="triUp" s={5} /><Thumb $h="12px" /><Icon n="triDown" s={4} /></Scroll>
              </SwatchArea>
              <PanelHeader title="组件" />
              <PanelHeader title="样式" open />
            </Panels>
            <Scroll><Icon n="triUp" s={5} /><Thumb $h="58%" /><Icon n="triDown" s={4} /></Scroll>
          </TrayMain>
        </Tray>
      </Work>
      <StatusBar>
        <IconButton aria-label="帮助"><Icon n="statusQ" s={7} /></IconButton>
        <IconButton aria-label="信息"><Icon n="statusI" s={7} /></IconButton>
        <StatusText>单击或拖动以选择对象。Shift = 加/减。Ctrl = 加。Shift + Ctrl = 减。</StatusText>
        <StatusGrip />
        <Measure aria-label="数值" />
      </StatusBar>
      <TaskBar>
        <Task $w={19} aria-label="开始"><Icon n="win" /></Task>
        {["edge", "chrome", "green", "code", "sketch", "media"].map((n) => <Task key={n} $on={n === "sketch"} aria-label={n}><Icon n={n} s={11} /></Task>)}
        <Systray>
          <Icon n="up" s={7} /><Icon n="monitor" s={8} /><Icon n="sound" s={8} /><Icon n="link" s={8} />英
          <time>12:57<br />2024-05-16</time>
          <Icon n="chat" />
        </Systray>
      </TaskBar>
    </Screen>
  );
}
